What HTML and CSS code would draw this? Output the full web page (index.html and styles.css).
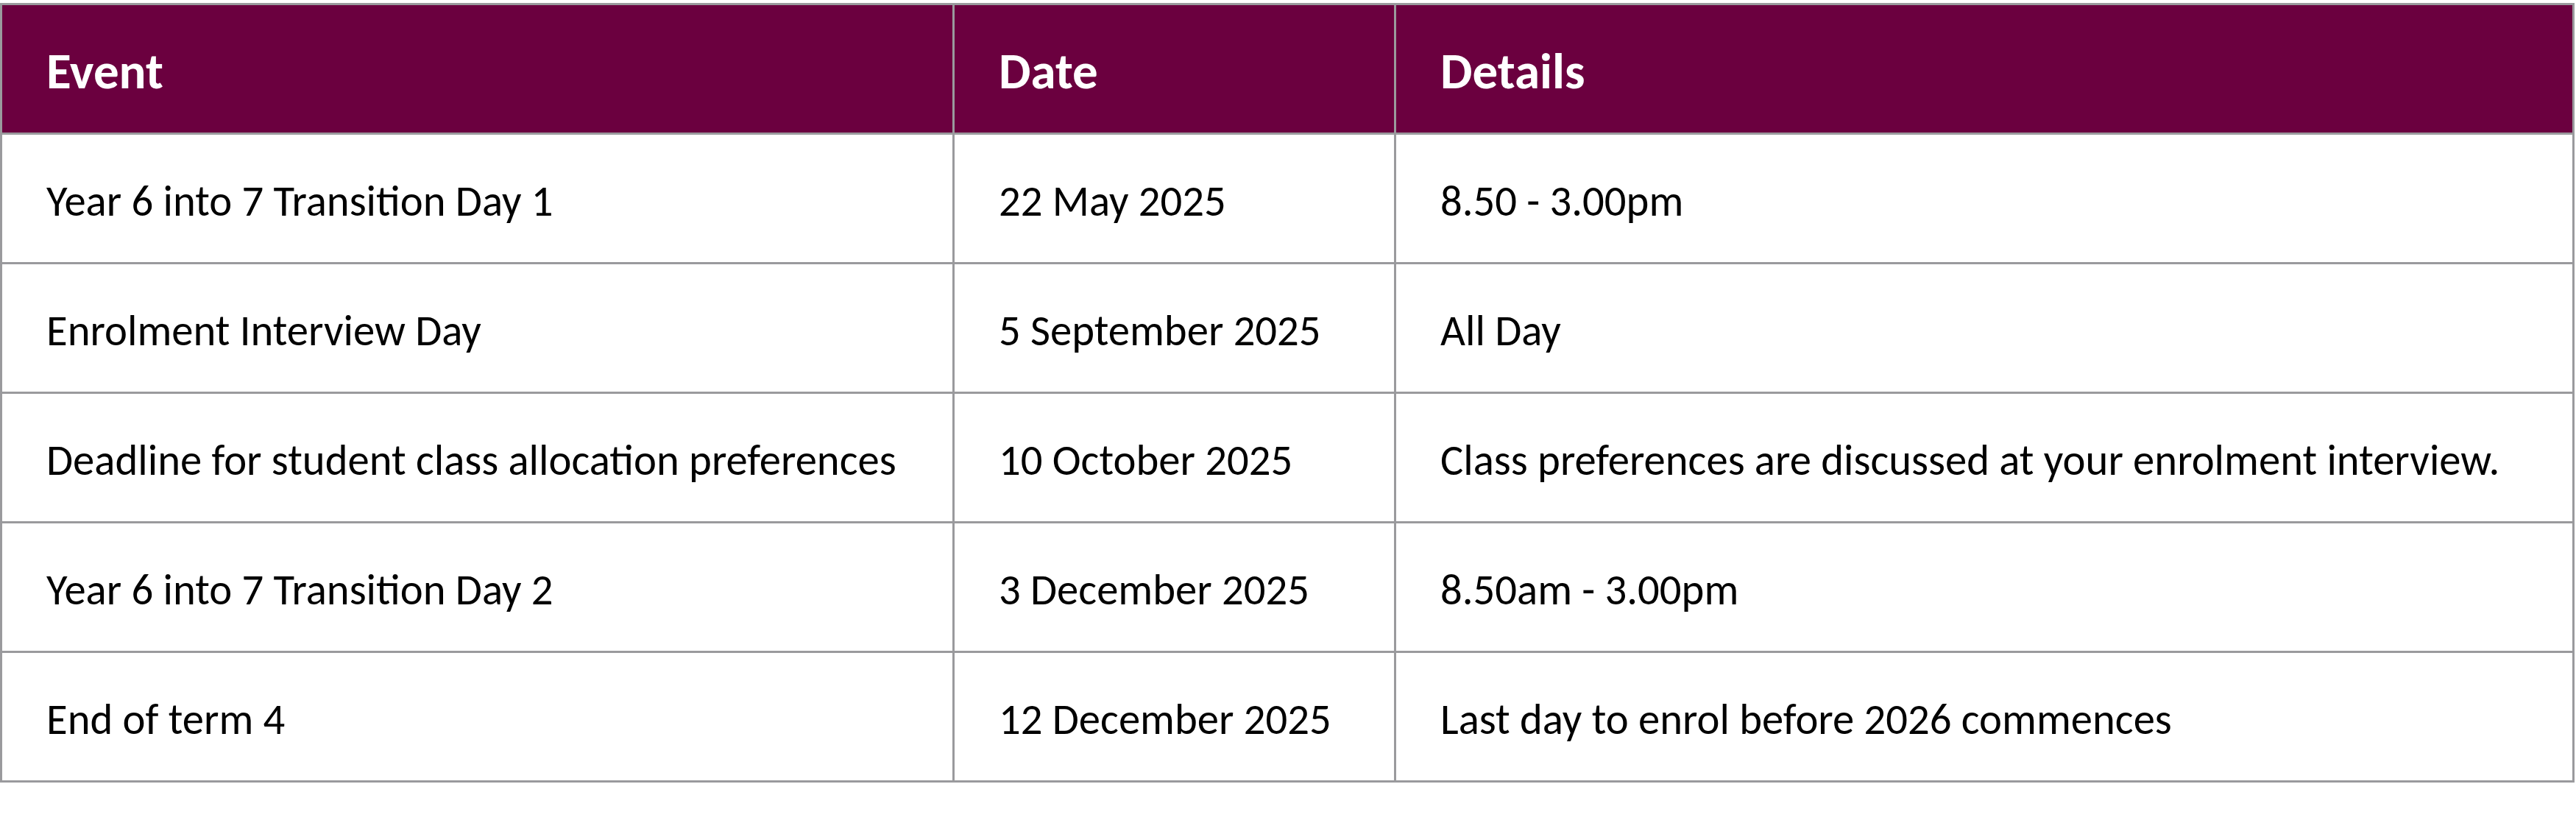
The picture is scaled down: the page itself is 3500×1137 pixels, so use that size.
FILE: index.html
```html
<!DOCTYPE html>
<html lang="en">
<head>
<meta charset="utf-8">
<title>Enrolment dates</title>
<link rel="stylesheet" href="styles.css">
</head>
<body>
<table class="events">
  <colgroup>
    <col class="col-event">
    <col class="col-date">
    <col class="col-details">
  </colgroup>
  <thead>
    <tr>
      <th>Event</th>
      <th>Date</th>
      <th>Details</th>
    </tr>
  </thead>
  <tbody>
    <tr>
      <td>Year 6 into 7 Transition Day 1</td>
      <td>22 May 2025</td>
      <td>8.50 - 3.00pm</td>
    </tr>
    <tr>
      <td>Enrolment Interview Day</td>
      <td>5 September 2025</td>
      <td>All Day</td>
    </tr>
    <tr>
      <td>Deadline for student class allocation preferences</td>
      <td>10 October 2025</td>
      <td>Class preferences are discussed at your enrolment interview.</td>
    </tr>
    <tr>
      <td>Year 6 into 7 Transition Day 2</td>
      <td>3 December 2025</td>
      <td>8.50am - 3.00pm</td>
    </tr>
    <tr>
      <td>End of term 4</td>
      <td>12 December 2025</td>
      <td>Last day to enrol before 2026 commences</td>
    </tr>
  </tbody>
</table>
</body>
</html>
```
FILE: styles.css
```css
html, body {
  margin: 0;
  padding: 0;
  background: #ffffff;
}

body {
  padding-top: 4px;
  font-family: Carlito, Calibri, Lato, "Liberation Sans", sans-serif;
  font-variant-ligatures: common-ligatures;
}

.events {
  border-collapse: collapse;
  table-layout: fixed;
  width: 3495px;
}

.col-event { width: 1294px; }
.col-date { width: 600px; }
.col-details { width: 1601px; }

.events th,
.events td {
  border: 3px solid #9a9a9d;
  height: 167px;
  padding: 6px 0 0 60px;
  text-align: left;
  vertical-align: middle;
  white-space: nowrap;
}

.events th {
  background: #6b003f;
  color: #ffffff;
  font-weight: 700;
  font-size: 69px;
}

.events td {
  color: #000000;
  font-weight: 400;
  font-size: 58.7px;
}
```
